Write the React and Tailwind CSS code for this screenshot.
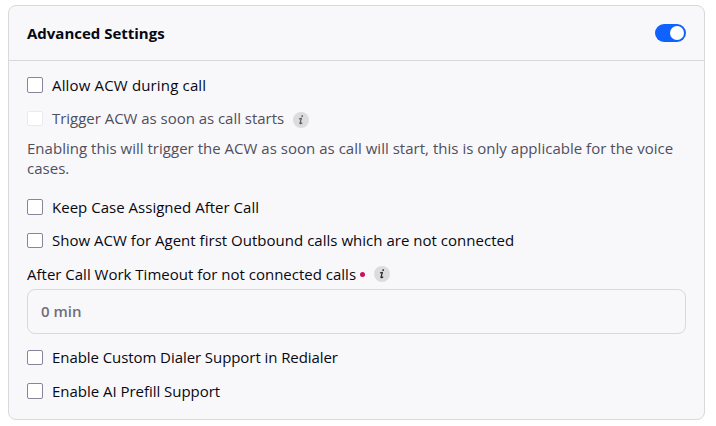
import React, { useState } from "react";

const InfoIcon = ({ className }) => (
  <svg className={`h-4 w-4 shrink-0 ${className}`} viewBox="0 0 16 16">
    <circle cx="8" cy="8" r="8" fill="#dcdcdd" />
    <path
      d="M6 7 8.4 6.3 7 11.2Q6.9 12.3 9.2 10.8"
      fill="none"
      stroke="currentColor"
      strokeWidth="1.2"
      strokeLinejoin="round"
    />
    <circle cx="9.2" cy="4.1" r="0.9" fill="currentColor" />
  </svg>
);

const CheckRow = ({ label, checked, onChange, disabled, compact, className, children }) => (
  <div className={`flex items-center ${compact ? "h-[33px]" : "h-[34px]"} ${className}`}>
    <label className="flex items-center">
      <input
        type="checkbox"
        checked={checked}
        onChange={onChange}
        disabled={disabled}
        className={`${compact ? "h-[15px]" : "h-4"} w-4 shrink-0 appearance-none rounded-[2px] border border-[#87859a] bg-white checked:bg-[#0f62fe] disabled:border-[#eaeaee]`}
      />
      <span className={`ml-[9px] whitespace-nowrap ${compact ? "mb-[2px]" : ""} ${disabled ? "text-[#504f5c]" : ""}`}>{label}</span>
    </label>
    {children}
  </div>
);

const App = () => {
  const [enabled, setEnabled] = useState(true);
  const [settings, setSettings] = useState({});

  const toggle = (key) => () => {
    setSettings({ ...settings, [key]: !settings[key] });
  };

  return (
    <div className="h-[426px] bg-white pt-[5px] pl-2 font-['Open_Sans','Noto_Sans',sans-serif] text-[15px] leading-5 text-[#080811]">
      <div className="h-[415px] w-[697px] rounded-lg border border-[#d9d9dc] bg-[#f8f8fb]">
        {/* Header */}
        <div className="flex h-[55px] items-center justify-between border-b border-[#d9d9dc] px-[18px]">
          <h2 className="font-bold tracking-[-0.01px]">Advanced Settings</h2>
          <button
            role="switch"
            aria-checked={enabled}
            aria-label="Advanced Settings"
            onClick={() => setEnabled(!enabled)}
            className={`flex h-[18px] w-[31px] items-center rounded-full px-[2px] ${enabled ? "justify-end bg-[#0f62fe]" : "justify-start bg-gray-400"}`}
          >
            <span className="h-[14px] w-[14px] rounded-full bg-white" />
          </button>
        </div>

        {/* Settings */}
        <div className="px-[18px] pt-[7px]">
          <CheckRow className="tracking-[0.16px]" label="Allow ACW during call" checked={!!settings.acw} onChange={toggle("acw")} />
          <CheckRow className="tracking-[-0.03px]" label="Trigger ACW as soon as call starts" checked={false} disabled compact>
            <InfoIcon className="ml-[9px] mt-[3px] text-[#55545f]" />
          </CheckRow>
          <p className="mt-[3px] mb-3 w-[655px] tracking-[0.02px] text-[#504f5c]">
            Enabling this will trigger the ACW as soon as call will start, this is only applicable for the voice cases.
          </p>
          <CheckRow className="tracking-[0.02px]" label="Keep Case Assigned After Call" checked={!!settings.keepCase} onChange={toggle("keepCase")} />
          <CheckRow
            className="tracking-[0.02px]"
            label="Show ACW for Agent first Outbound calls which are not connected"
            checked={!!settings.outbound}
            onChange={toggle("outbound")}
            compact
          />
          <div className="flex h-[32px] items-center pt-[2px]">
            <label htmlFor="timeout" className="whitespace-nowrap">
              After Call Work Timeout for not connected calls
            </label>
            <span className="ml-[4px] h-[5px] w-[5px] rounded-full bg-[#c9125f]" />
            <InfoIcon className="ml-[9px] text-[#24232d]" />
          </div>
          <input
            id="timeout"
            placeholder="0 min"
            className="block h-[45px] w-full rounded-lg border border-[#d9d9dc] px-[13px] pb-[2px] font-semibold placeholder:text-[#6f6e7e]"
          />
          <CheckRow className="mt-[7px] tracking-[-0.07px]" label="Enable Custom Dialer Support in Redialer" checked={!!settings.dialer} onChange={toggle("dialer")} compact />
          <CheckRow className="tracking-[-0.03px]" label="Enable AI Prefill Support" checked={!!settings.prefill} onChange={toggle("prefill")} />
        </div>
      </div>
    </div>
  );
};

export default App;
